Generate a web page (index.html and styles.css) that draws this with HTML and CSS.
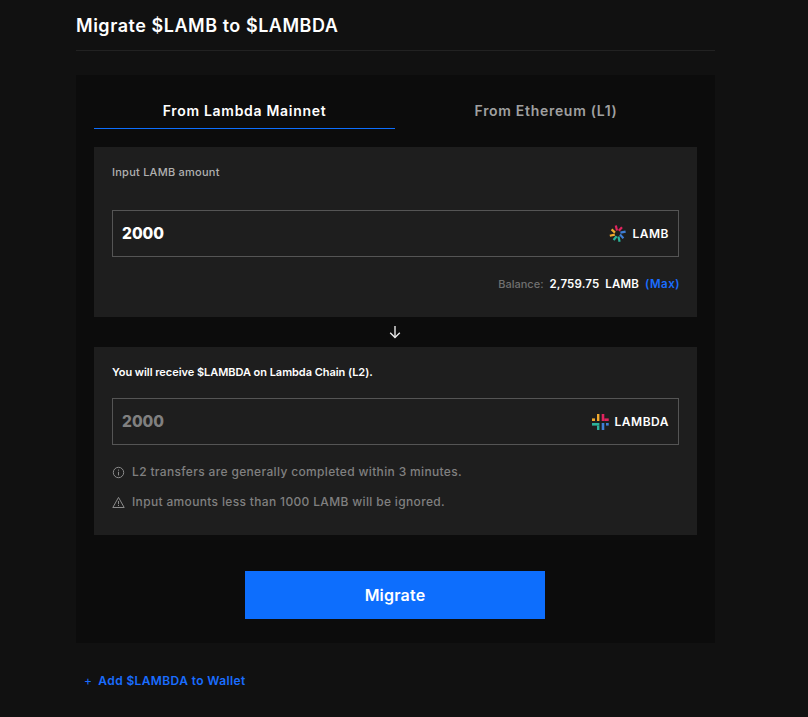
FILE: index.html
```html
<!DOCTYPE html>
<html lang="en">
<head>
    <meta charset="UTF-8">
    <meta name="viewport" content="width=device-width, initial-scale=1.0">
    <title>Migrate</title>
    <link rel="stylesheet" href="styles.css">
</head>
<body>

<div class="page">
    <h1 class="page-title">Migrate $LAMB to $LAMBDA</h1>

    <div class="card">
        <div class="tabs">
            <div class="tab active">From Lambda Mainnet</div>
            <div class="tab">From Ethereum (L1)</div>
        </div>

        <div class="panel panel-from">
            <p class="panel-label">Input LAMB amount</p>
            <div class="amount-box">
                <span class="amount">2000</span>
                <span class="token">
                    <svg class="token-icon" width="18" height="18" viewBox="0 0 18 18" fill="none" stroke-width="2.2">
                        <path d="M8 5.6 L6.8 0.6" stroke="#e0245e"/>
                        <path d="M9.8 5.8 L13 2.2" stroke="#e0245e"/>
                        <path d="M11.4 7.6 L16.6 6.6" stroke="#3f7fd8"/>
                        <path d="M11 9.6 L14.4 13.2" stroke="#3f7fd8"/>
                        <path d="M9.4 11.4 L10.6 16.8" stroke="#2bb39a"/>
                        <path d="M7.6 11.2 L4.6 15" stroke="#2bb39a"/>
                        <path d="M5.8 9.6 L0.8 10.8" stroke="#f0a92e"/>
                        <path d="M6 7.6 L2.6 4.4" stroke="#f0a92e"/>
                    </svg>
                    LAMB
                </span>
            </div>
            <div class="balance">
                <span class="balance-label">Balance:</span>
                <span class="balance-value">2,759.75&nbsp; LAMB</span>
                <a class="max-link">(Max)</a>
            </div>
        </div>

        <div class="arrow-row">
            <svg width="14" height="14" viewBox="0 0 14 14" fill="none" stroke="#e8e8e8" stroke-width="1.4">
                <path d="M7 1 V12.5"/>
                <path d="M2.2 7.8 L7 12.5 L11.8 7.8"/>
            </svg>
        </div>

        <div class="panel panel-to">
            <p class="panel-label strong">You will receive $LAMBDA on Lambda Chain (L2).</p>
            <div class="amount-box">
                <span class="amount muted">2000</span>
                <span class="token">
                    <svg class="token-icon" width="17" height="16" viewBox="0 0 17 16">
                        <g fill="#f0a92e">
                            <rect x="5" y="0" width="2.4" height="7"/>
                            <rect x="0" y="4.4" width="3" height="2.6"/>
                        </g>
                        <g fill="#e0245e">
                            <rect x="9.7" y="0" width="2.6" height="7"/>
                            <rect x="12.3" y="4.4" width="4.4" height="2.6"/>
                        </g>
                        <g fill="#2bb39a">
                            <rect x="0" y="9" width="7.4" height="2.6"/>
                            <rect x="5" y="11.6" width="2.4" height="4.4"/>
                        </g>
                        <g fill="#3f7fd8">
                            <rect x="9.7" y="9" width="2.6" height="7"/>
                            <rect x="14" y="9" width="2.7" height="2.6"/>
                        </g>
                    </svg>
                    LAMBDA
                </span>
            </div>
            <div class="note">
                <svg width="13" height="13" viewBox="0 0 13 13" fill="none" stroke="#8a8a8a" stroke-width="1">
                    <circle cx="6.5" cy="6.5" r="5.2"/>
                    <path d="M6.5 5.8 V9.4 M6.5 3.6 V4.7"/>
                </svg>
                L2 transfers are generally completed within 3 minutes.
            </div>
            <div class="note">
                <svg width="13" height="13" viewBox="0 0 13 13" fill="none" stroke="#8a8a8a" stroke-width="1">
                    <path d="M6.5 1.4 L12.2 11.5 H0.8 Z"/>
                    <path d="M6.5 5 V8.2 M6.5 9 V10"/>
                </svg>
                Input amounts less than 1000 LAMB will be ignored.
            </div>
        </div>

        <button class="migrate-btn">Migrate</button>
    </div>

    <a class="add-link"><span class="plus">+</span>Add $LAMBDA to Wallet</a>
</div>

</body>
</html>
```

FILE: styles.css
```css
* {
    box-sizing: border-box;
}
html, body {
    margin: 0;
    height: 717px;
    overflow: hidden;
}
body {
    background-color: #111111;
    font-family: Inter, sans-serif;
    color: #ffffff;
}
.page {
    width: 639px;
    margin-left: 76px;
}
.page-title {
    margin: 0;
    height: 51px;
    padding-top: 15px;
    font-size: 18px;
    line-height: 22px;
    font-weight: 600;
    letter-spacing: 0.53px;
    border-bottom: 1px solid #222222;
}
.card {
    margin-top: 24px;
    height: 568px;
    padding: 18px 18px 0;
    background: #0c0c0c;
}
.tabs {
    display: flex;
    height: 36px;
}
.tab {
    flex: 1;
    text-align: center;
    font-size: 14px;
    line-height: 36px;
    font-weight: 600;
    letter-spacing: 0.7px;
    color: #a0a0a0;
}
.tab.active {
    flex: 0 0 301px;
    color: #ffffff;
    border-bottom: 1px solid #0d6efd;
}
.panel {
    background: #1e1e1e;
    padding: 0 18px;
}
.panel-from {
    margin-top: 18px;
    height: 170px;
    padding-top: 18px;
}
.panel-to {
    height: 188px;
    padding-top: 18px;
}
.panel-label {
    margin: 0;
    font-size: 11px;
    line-height: 14px;
    font-weight: 500;
    letter-spacing: 0.24px;
    color: #b0b0b0;
}
.panel-label.strong {
    color: #ffffff;
    font-weight: 600;
    letter-spacing: -0.04px;
}
.panel-from .amount-box {
    margin-top: 31px;
}
.panel-to .amount-box {
    margin-top: 19px;
}
.amount-box {
    display: flex;
    justify-content: space-between;
    align-items: center;
    height: 47px;
    padding: 0 9px;
    border: 1px solid #555555;
}
.amount {
    font-size: 15.5px;
    font-weight: 800;
}
.amount.muted {
    color: #808080;
}
.token {
    display: flex;
    align-items: center;
    gap: 6px;
    font-size: 12px;
    font-weight: 600;
    letter-spacing: 0.5px;
}
.balance {
    display: flex;
    justify-content: flex-end;
    gap: 6px;
    margin-top: 19px;
    font-size: 11.5px;
    line-height: 16px;
    font-weight: 600;
}
.balance-label {
    color: #707070;
    font-size: 11px;
    font-weight: 500;
}
.balance-value {
    letter-spacing: 0.15px;
}
.max-link {
    margin-right: -1px;
    color: #1a6dff;
    letter-spacing: 0.5px;
}
.arrow-row {
    display: flex;
    justify-content: center;
    align-items: center;
    height: 30px;
    padding-right: 2px;
}
.note {
    display: flex;
    align-items: center;
    gap: 7px;
    margin-top: 12px;
    font-size: 12px;
    line-height: 18px;
    font-weight: 500;
    letter-spacing: 0.34px;
    color: #808080;
}
.panel-to .amount-box + .note {
    margin-top: 18px;
}
.migrate-btn {
    display: block;
    width: 300px;
    height: 48px;
    margin: 36px 0 0 151px;
    border: none;
    background: #0d6efd;
    color: #ffffff;
    font-family: inherit;
    font-size: 16px;
    font-weight: 600;
    letter-spacing: 0.2px;
}
.add-link {
    display: block;
    margin: 29px 0 0 8px;
    font-size: 12px;
    line-height: 18px;
    font-weight: 600;
    letter-spacing: 0.38px;
    color: #1a6dff;
}
.plus {
    margin-right: 6px;
    font-weight: 400;
}
```
